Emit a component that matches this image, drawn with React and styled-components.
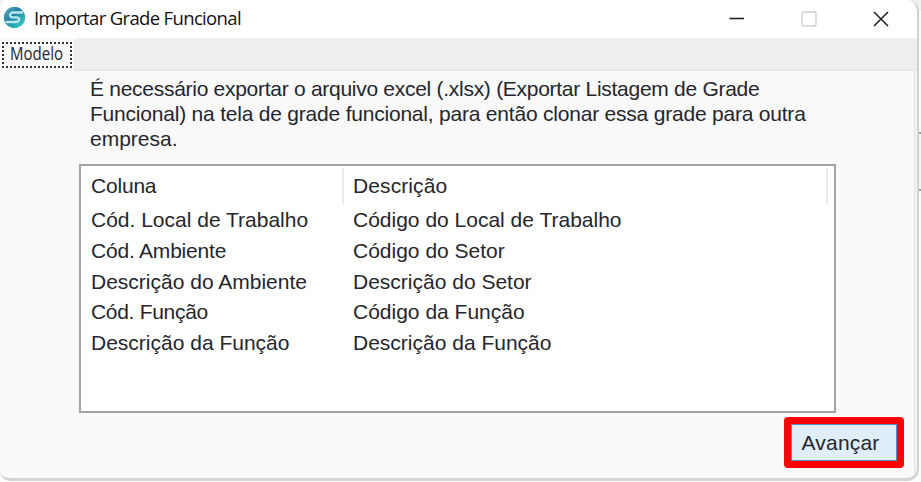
import React from 'react';
import styled, { createGlobalStyle } from 'styled-components';

const GlobalStyle = createGlobalStyle`
  * {
    box-sizing: border-box;
  }

  body {
    margin: 0;
    background: #fbfbfb;
    overflow: hidden;
    font-family: "Liberation Sans", Arial, sans-serif;
    color: #26262c;
  }
`;

const Desktop = styled.div`
  display: flex;
  width: 921px;
  height: 482px;
  background: linear-gradient(#f1f1f1 11px, #fcfcfc 11px);
`;

const Window = styled.div`
  display: flex;
  flex-direction: column;
  flex: none;
  width: 919px;
  height: 481px;
  border-right: 2px solid #d0d0d0;
  border-bottom: 3px solid #d3d3d3;
  border-radius: 8px 12px 12px 10px;
  background: #f9f9f9;
  overflow: hidden;
`;

/* slice of the window behind, visible along the right edge */
const Behind = styled.div`
  width: 2px;
  height: 59px;
  margin-top: 132px;
  border-top: 2px solid #9b9ca0;
  border-bottom: 2px solid #9b9ca0;
  background: #f6f6f6;
`;

const TitleBar = styled.div`
  display: flex;
  align-items: center;
  flex: none;
  height: 38px;
  padding-left: 3px;
  background: #fff;

  & > svg {
    margin-bottom: 4px;
  }
`;

const Title = styled.span`
  flex: 1;
  margin-left: 8px;
  font-family: "Open Sans", "Segoe UI", sans-serif;
  font-size: 18.5px;
  line-height: 34px;
  padding-bottom: 2px;
  letter-spacing: -0.65px;
  white-space: nowrap;
  color: #111;
`;

const Controls = styled.div`
  display: flex;
  align-items: center;
  gap: 56px;
  margin-right: 28px;
  padding-bottom: 1px;
`;

const TabStrip = styled.div`
  flex: none;
  height: 33px;
  border-bottom: 2px solid #e8e8e8;
  background: #eee;
`;

const Tab = styled.div`
  width: 74px;
  height: 33px;
  padding: 4px 2px 0;
  background: #f9f9f9;
`;

const TabFocus = styled.div`
  width: 70px;
  height: 26px;
  border: 2px dotted #333;
  padding-left: 6px;
`;

const TabLabel = styled.span`
  display: block;
  font-family: "Open Sans", Tahoma, sans-serif;
  font-size: 17.5px;
  line-height: 19px;
  white-space: nowrap;
  transform: scaleX(0.86);
  transform-origin: left;
`;

const Page = styled.div`
  display: flex;
  flex-direction: column;
  flex: 1;
  margin-right: 1px;
  padding: 5px 14px 0 79px;
  border-right: 2px solid #e9e9e9;
`;

const Message = styled.p`
  margin: 0 0 13px 11px;
  font-size: 21px;
  line-height: 25px;
`;

const Line = styled.span`
  display: block;
  white-space: nowrap;
  letter-spacing: ${(props) => props.$spacing}px;
`;

const List = styled.div`
  width: 757px;
  height: 249px;
  padding-top: 2px;
  border: 2px solid #a0a4a9;
  background: #fff;
`;

const Row = styled.div`
  display: grid;
  grid-template-columns: 262px 1fr;
  height: 30.8px;
  font-size: 21px;
  line-height: 31px;
  white-space: nowrap;
`;

const HeaderRow = styled(Row)`
  grid-template-columns: 263px 484px;
  height: 36px;
  line-height: 36px;
`;

const Cell = styled.div`
  padding-left: 10px;
  letter-spacing: ${(props) => props.$spacing || 0}px;
`;

const HeaderCell = styled(Cell)`
  border-right: 2px solid #ebebeb;

  & + & {
    padding-left: 9px;
  }
`;

const Button = styled.button`
  align-self: flex-end;
  width: 120px;
  height: 51px;
  margin: 4px -4px 0 0;
  padding: 0 7px 0 0;
  border: 7px solid #fe0000;
  border-radius: 4px;
  background: #e0eefa;
  box-shadow: inset 0 0 0 1px #4f8fc4;
  font-family: inherit;
  font-size: 21px;
  letter-spacing: 0.2px;
  color: #26262c;
`;

const message = [
  { text: 'É necessário exportar o arquivo excel (.xlsx) (Exportar Listagem de Grade', spacing: -0.28 },
  { text: 'Funcional) na tela de grade funcional, para então clonar essa grade para outra', spacing: -0.21 },
  { text: 'empresa.', spacing: 0 },
];

const columns = [
  { name: 'Cód. Local de Trabalho', description: 'Código do Local de Trabalho' },
  { name: 'Cód. Ambiente', description: 'Código do Setor', spacing: -0.2 },
  { name: 'Descrição do Ambiente', description: 'Descrição do Setor' },
  { name: 'Cód. Função', description: 'Código da Função', spacing: -0.3 },
  { name: 'Descrição da Função', description: 'Descrição da Função' },
];

const Logo = () => (
  <svg width="23" height="23" viewBox="0 0 23 23">
    <defs>
      <linearGradient id="ball" x1="0" y1="0" x2="1" y2="1">
        <stop offset="0" stopColor="#65b9c8" />
        <stop offset="0.4" stopColor="#277fa5" />
        <stop offset="0.65" stopColor="#20a9ae" />
        <stop offset="1" stopColor="#55d6c8" />
      </linearGradient>
    </defs>
    <circle cx="11.5" cy="11.5" r="10.7" fill="url(#ball)" />
    <path
      d="M20 6.5H11C6.5 6.5 5.5 11 9.5 11.3H14C17.5 11.7 16.5 16 13 16H2.5"
      fill="none"
      stroke="#b9e8ec"
      strokeWidth="2.3"
    />
  </svg>
);

const App = () => {
  return (
    <>
      <GlobalStyle />
      <Desktop>
        <Window>
          <TitleBar>
            <Logo />
            <Title>Importar Grade Funcional</Title>
            <Controls>
              <svg width="16" height="16" viewBox="0 0 16 16">
                <path d="M0.5 7.5H15" stroke="#222" strokeWidth="1.6" />
              </svg>
              <svg width="16" height="16" viewBox="0 0 16 16">
                <rect x="1" y="1" width="14" height="14" rx="1.5" fill="none" stroke="#cfcfcf" strokeWidth="1.4" />
              </svg>
              <svg width="16" height="16" viewBox="0 0 16 16">
                <path d="M1 1L15 15M15 1L1 15" stroke="#222" strokeWidth="1.6" />
              </svg>
            </Controls>
          </TitleBar>
          <TabStrip>
            <Tab>
              <TabFocus>
                <TabLabel>Modelo</TabLabel>
              </TabFocus>
            </Tab>
          </TabStrip>
          <Page>
            <Message>
              {message.map((line) => (
                <Line key={line.text} $spacing={line.spacing}>
                  {line.text}
                </Line>
              ))}
            </Message>
            <List>
              <HeaderRow>
                <HeaderCell $spacing={-0.2}>Coluna</HeaderCell>
                <HeaderCell $spacing={0.1}>Descrição</HeaderCell>
              </HeaderRow>
              {columns.map((column) => (
                <Row key={column.name}>
                  <Cell $spacing={column.spacing}>{column.name}</Cell>
                  <Cell>{column.description}</Cell>
                </Row>
              ))}
            </List>
            <Button type="button">Avançar</Button>
          </Page>
        </Window>
        <Behind />
      </Desktop>
    </>
  );
};

export default App;
